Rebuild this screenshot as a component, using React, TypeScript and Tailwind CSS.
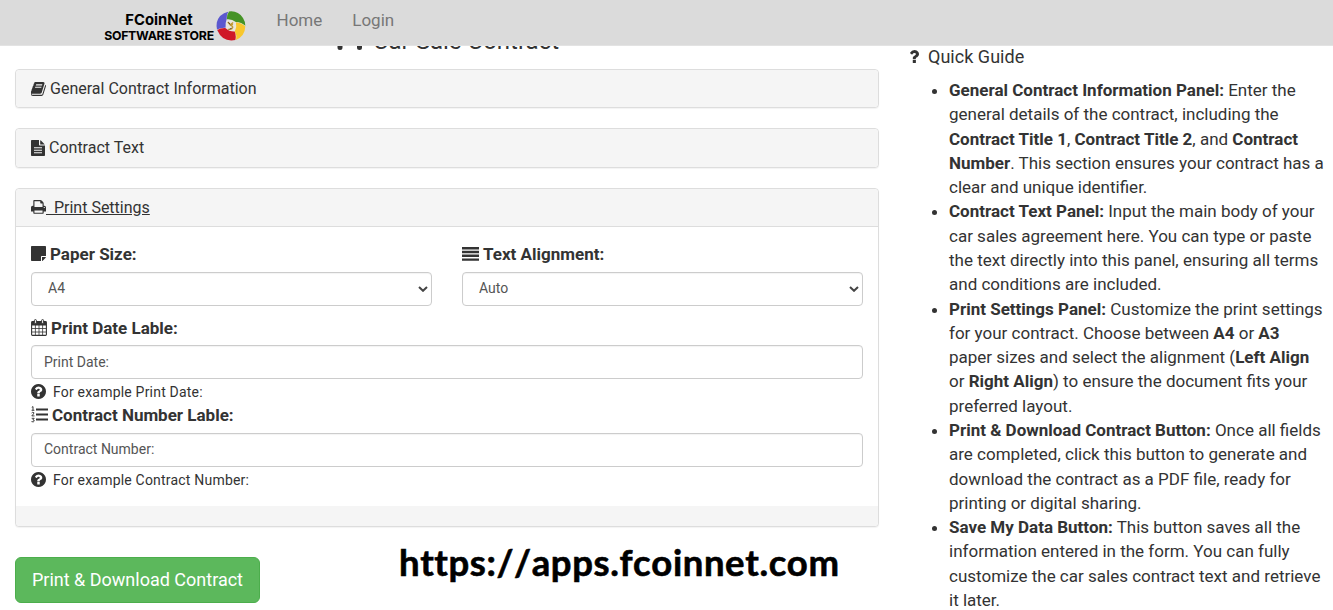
import type { ReactNode } from "react";

const PATHS = {
  book: "M1639 478q40 57 18 129l-275 906q-19 64-76.5 107.5t-122.5 43.5h-923q-77 0-148.5-53.5t-99.5-131.5q-24-67-2-127 0-4 3-27t4-37q1-8-3-21.5t-3-19.5q2-11 8-21t16.5-23.5 16.5-23.5q23-38 45-91.5t30-91.5q3-10 .5-30t-.5-28q3-11 17-28t17-23q21-36 42-92t25-90q1-9-2.5-32t.5-28q4-13 22-30.5t22-22.5q19-26 42.5-84.5t27.5-96.5q1-8-3-25.5t-2-26.5q2-8 9-18t18-23 17-21q8-12 16.5-30.5t15-35 16-36 19.5-32 26.5-23.5 36-11.5 47.5 5.5l-1 3q38-9 51-9h761q74 0 114 56t18 130l-274 906q-36 119-71.5 153.5t-128.5 34.5h-869q-27 0-38 15-11 16-1 43 24 70 144 70h923q29 0 56-15.5t35-41.5l300-987q7-22 5-57 38 15 59 43zm-1064 2q-4 13 2 22.5t20 9.5h608q13 0 25.5-9.5t16.5-22.5l21-64q4-13-2-22.5t-20-9.5h-608q-13 0-25.5 9.5t-16.5 22.5zm-83 256q-4 13 2 22.5t20 9.5h608q13 0 25.5-9.5t16.5-22.5l21-64q4-13-2-22.5t-20-9.5h-608q-13 0-25.5 9.5t-16.5 22.5z",
  print: "M448 1536h896v-256h-896v256zm0-640h896v-384h-160q-40 0-68-28t-28-68v-160h-640v640zm1152 64q0-26-19-45t-45-19-45 19-19 45 19 45 45 19 45-19 19-45zm128 0v416q0 13-9.5 22.5t-22.5 9.5h-224v160q0 40-28 68t-68 28h-960q-40 0-68-28t-28-68v-160h-224q-13 0-22.5-9.5t-9.5-22.5v-416q0-79 56.5-135.5t135.5-56.5h64v-544q0-40 28-68t68-28h672q40 0 88 20t76 48l152 152q28 28 48 76t20 88v256h64q79 0 135.5 56.5t56.5 135.5z",
  help: "M1024 1376v-192q0-14-9-23t-23-9h-192q-14 0-23 9t-9 23v192q0 14 9 23t23 9h192q14 0 23-9t9-23zm256-672q0-88-55.5-163t-138.5-116-170-41q-243 0-371 213-15 24 8 42l132 100q7 6 19 6 16 0 25-12 53-68 86-92 34-24 86-24 48 0 85.5 26t37.5 59q0 38-20 61t-68 45q-63 28-115.5 86.5t-52.5 125.5v36q0 14 9 23t23 9h192q14 0 23-9t9-23q0-19 21.5-49.5t54.5-49.5q32-18 49-28.5t46-35 44.5-48 28-60.5 12.5-81zm384 192q0 209-103 385.5t-279.5 279.5-385.5 103-385.5-103-279.5-279.5-103-385.5 103-385.5 279.5-279.5 385.5-103 385.5 103 279.5 279.5 103 385.5z",
  question: "M1024 1376v-192q0-14-9-23t-23-9h-192q-14 0-23 9t-9 23v192q0 14 9 23t23 9h192q14 0 23-9t9-23zm256-672q0-88-55.5-163t-138.5-116-170-41q-243 0-371 213-15 24 8 42l132 100q7 6 19 6 16 0 25-12 53-68 86-92 34-24 86-24 48 0 85.5 26t37.5 59q0 38-20 61t-68 45q-63 28-115.5 86.5t-52.5 125.5v36q0 14 9 23t23 9h192q14 0 23-9t9-23q0-19 21.5-49.5t54.5-49.5q32-18 49-28.5t46-35 44.5-48 28-60.5 12.5-81z",
};

function Glyph({ d, box, className }: { d: string; box: string; className: string }) {
  return (
    <svg viewBox={box} className={className} fill="currentColor" preserveAspectRatio="none">
      <path d={d} />
    </svg>
  );
}

function FileText() {
  return (
    <svg viewBox="0 0 14 16" className="-mt-px h-4 w-[14px]" fill="currentColor">
      <path fillRule="evenodd" d="M.8 0H8v4.800q0 .8.800.8H14v9.600q0 .8-.8.8H.8q-.8 0-.8-.8V.8Q0 0 .8 0zM3 7.200v1h8v-1zM3 9.700v1h8v-1zM3 12.200v1h8v-1z" />
      <path d="M9.200.2q.4.100.7.400l3.400 3.400q.3.300.4.600H9.200z" />
    </svg>
  );
}

function Note() {
  return (
    <svg viewBox="0 0 15 15" className="h-[15px] w-[15px]" fill="currentColor">
      <path d="M.8 0h13.4q.8 0 .8.8V10h-4.2q-.8 0-.8.8V15H.8Q0 15 0 14.200V.8Q0 0 .8 0zM11 11h3.900q-.2.700-.7 1.200l-2 2q-.5.500-1.200.7z" />
    </svg>
  );
}

function Calendar() {
  return (
    <svg viewBox="0 0 16 17" className="h-[17px] w-4" fill="none" stroke="currentColor">
      <path d="M1 2.500h14v4H1z" fill="currentColor" stroke="none" />
      <rect x=".6" y="2.600" width="14.800" height="13.800" rx=".8" strokeWidth="1.100" />
      <path d="M1 9.500h14M1 13h14M4.400 6v10M8 6v10M11.600 6v10" strokeWidth=".8" />
      <rect x="3.400" y=".6" width="2" height="3.800" rx=".9" fill="white" strokeWidth="1" />
      <rect x="10.600" y=".6" width="2" height="3.800" rx=".9" fill="white" strokeWidth="1" />
    </svg>
  );
}

function Lines() {
  return (
    <svg viewBox="0 0 17 14" className="h-[14px] w-[17px]" fill="currentColor">
      <path d="M0 0h17v2.400H0zM0 3.800h17v2.400H0zM0 7.600h17V10H0zM0 11.400h17v2.400H0z" />
    </svg>
  );
}

function NumberedLines() {
  return (
    <svg viewBox="0 0 17 17" className="h-[17px] w-[17px]" fill="none" stroke="currentColor">
      <path d="M5 3.500h12M5 8.500h12M5 13.500h12" strokeWidth="2.200" />
      <path d="M.8 1.300 2 .6v3.600M.6 4.300h2.800M.6 7q1-1.200 2.200-.4.500.9-2 3.300h2.700M.7 12.300h2.500l-1.300 1.500q1.600 0 1.300 1.300-.5 1.300-2.700.5" strokeWidth=".95" />
    </svg>
  );
}

function Car() {
  return (
    <svg viewBox="0 0 28 20" className="h-5 w-7" fill="#333">
      <path d="M4 6 6.500 1Q7 0 8.500 0h11q1.500 0 2 1L24 6q3 .5 3 2.500V13v4.500a2.500 2.500 0 0 1-5 0V13H7.500v4.500a2.500 2.500 0 0 1-5 0V13H1V8.500Q1 6.500 4 6z" />
    </svg>
  );
}

function Logo() {
  return (
    <div className="flex w-[143px] items-center">
      <div className="flex w-[112px] shrink-0 flex-col items-center pt-[3px] whitespace-nowrap font-['Inter',sans-serif] font-bold text-black">
        <span className="text-[14.800px] leading-[15px]">FCoinNet</span>
        <span className="mt-px text-[12.300px] leading-[14px] tracking-[-0.260px]">SOFTWARE STORE</span>
      </div>
      <svg viewBox="0 0 30 30" className="-mt-[2px] ml-px h-[30px] w-[30px] shrink-0">
        <circle cx="14.800" cy="15" r="13.800" fill="#e8e6de" />
        <path d="M12.200.8Q3 3 .8 11.500q-.6 3.500.2 6.900 4-2 8.600-1.700Q9 12.500 10.700 8q-.3-4 1.500-7.200z" fill="#5b58cf" />
        <path d="M13 .5Q22-.6 27 7q2.300 3.500 2.300 7.700Q25.500 11 19.800 10.900 16 7.700 10.900 8.200 10.800 3.500 13 .5z" fill="#459326" />
        <path d="M29.300 15.500Q29 25 20 28.900q1.200-4-1.200-8.300 2.300-4.500 1.100-9.400 5.500.5 9.400 4.300z" fill="#f8c72d" />
        <path d="M1.200 19Q4.500 16.800 9.300 17q4.200 3.800 9.400 3.500 1.800 4.500.6 8.600Q6.500 31.500 1.200 19z" fill="#cf1828" />
        <path d="m11.800 11 2.200 2.700 3.200-2.200M12 18.300q4 .7 4.700-1.700.2-2-2.700-2.500l3-1" fill="none" stroke="#c29b35" strokeWidth="1.300" />
        <path d="m12.500 11.300 1.500 2M13.500 18.200l2.200-1" stroke="#33291c" strokeWidth=".8" />
      </svg>
    </div>
  );
}

function Panel({ children }: { children: ReactNode }) {
  return <section className="rounded border border-[#ddd] bg-white shadow-[0_1px_1px_rgba(0,0,0,0.05)]">{children}</section>;
}

function Select({ value }: { value: string }) {
  return (
    <div className="flex h-[34px] items-center justify-between rounded border border-[#ccc] pr-[3px] pl-4 text-[14px] text-[#555] shadow-[inset_0_1px_1px_rgba(0,0,0,0.05)]">
      <span className="-mt-0.5">{value}</span>
      <svg viewBox="0 0 10 6" className="h-1.5 w-2.5" fill="none" stroke="#444" strokeWidth="2">
        <path d="m1 1 4 3.800L9 1" />
      </svg>
    </div>
  );
}

function Field({ value, className }: { value: string; className: string }) {
  return (
    <div className="flex h-[34px] items-center rounded border border-[#ccc] pl-3 text-[14px] text-[#555] shadow-[inset_0_1px_1px_rgba(0,0,0,0.05)]">
      <span className={className}>{value}</span>
    </div>
  );
}

function Hint({ children }: { children: ReactNode }) {
  return (
    <div className="flex h-[25px] items-center text-[14px] tracking-[0.200px]">
      <Glyph d={PATHS.help} box="128 128 1536 1536" className="mr-[7px] h-[15px] w-[15px]" />
      <span className="pt-px">{children}</span>
    </div>
  );
}

function Label({ icon, children }: { icon: ReactNode; children: ReactNode }) {
  return (
    <div className="flex h-6 items-center gap-1 whitespace-nowrap text-[17px] font-bold">
      <span className="-mt-px">{icon}</span>
      <span className="pt-0.5">{children}</span>
    </div>
  );
}

function Guide() {
  return (
    <aside className="w-[430px] shrink-0 pt-[44px]">
      <h4 className="flex h-6 items-center text-[18px] tracking-[0.03px]">
        <Glyph d={PATHS.question} box="540 384 740 1024" className="mr-[9px] ml-0.5 h-[13px] w-[9px]" />
        Quick Guide
      </h4>
      <ul className="mt-[10px] ml-[41px] list-disc text-[17px] leading-[24.286px] whitespace-nowrap">
        <li><b>General Contract Information Panel:</b> Enter the<br />general details of the contract, including the<br /><b>Contract Title 1</b>, <b>Contract Title 2</b>, and <b>Contract<br />Number</b>. This section ensures your contract has a<br />clear and unique identifier.</li>
        <li><b>Contract Text Panel:</b> Input the main body of your<br />car sales agreement here. You can type or paste<br />the text directly into this panel, ensuring all terms<br />and conditions are included.</li>
        <li><b>Print Settings Panel:</b> Customize the print settings<br />for your contract. Choose between <b>A4</b> or <b>A3</b><br />paper sizes and select the alignment (<b>Left Align</b><br />or <b>Right Align</b>) to ensure the document fits your<br />preferred layout.</li>
        <li><b>Print &amp; Download Contract Button:</b> Once all fields<br />are completed, click this button to generate and<br />download the contract as a PDF file, ready for<br />printing or digital sharing.</li>
        <li><b>Save My Data Button:</b> This button saves all the<br />information entered in the form. You can fully<br />customize the car sales contract text and retrieve<br />it later.</li>
      </ul>
    </aside>
  );
}

export default function App() {
  return (
    <div className="h-[610px] w-[1333px] overflow-hidden bg-white font-['Roboto',sans-serif] text-[17px] text-[#333]">
      <header className="fixed top-0 left-0 z-10 flex h-[46px] w-[1333px] items-start border-b border-[#e3e3e3] bg-[#dbdbdb] pl-[103px]">
        <div className="mt-[10px]"><Logo /></div>
        <nav className="mt-2 ml-[30.500px] flex gap-[30px] text-[17px] leading-6 text-[#777]">
          <a>Home</a>
          <a>Login</a>
        </nav>
      </header>
      <div className="flex gap-[29px] pl-[15px]">
        <main className="w-[864px] shrink-0">
          <div className="flex h-[69px] justify-center pt-[28px] text-[24px] leading-[26px]">
            <div className="flex gap-[10px]"><div className="pt-[2px]"><Car /></div><h3>Car Sale Contract</h3></div>
          </div>
          <div className="flex flex-col gap-5 text-[16px]">
            <Panel>
              <div className="flex h-[37px] items-center gap-1 rounded bg-[#f5f5f5] px-[15px]">
                <Glyph d={PATHS.book} box="60 128 1605 1536" className="h-[14px] w-[15px]" />
                General Contract Information
              </div>
            </Panel>
            <Panel>
              <div className="flex h-[38px] items-center gap-1 rounded bg-[#f5f5f5] px-[15px]">
                <FileText />
                Contract Text
              </div>
            </Panel>
            <Panel>
              <div className="flex h-[38px] items-center rounded-t border-b border-[#ddd] bg-[#f5f5f5] px-[15px]">
                <Glyph d={PATHS.print} box="64 128 1664 1664" className="h-[15px] w-[15px]" />
                <span className="whitespace-pre underline">{"  Print Settings"}</span>
              </div>
              <div className="h-[279px] px-[15px] pt-[15px]">
                <div className="grid grid-cols-2 gap-[30px]">
                  <div>
                    <Label icon={<Note />}>Paper Size:</Label>
                    <div className="mt-[6px]"><Select value="A4" /></div>
                  </div>
                  <div>
                    <Label icon={<Lines />}>Text Alignment:</Label>
                    <div className="mt-[6px]"><Select value="Auto" /></div>
                  </div>
                </div>
                <div className="mt-[10px] mb-[5px]"><Label icon={<Calendar />}>Print Date Lable:</Label></div>
                <Field value="Print Date:" className="pt-px" />
                <Hint>For example Print Date:</Hint>
                <div className="mt-[-1px] mb-[6px]"><Label icon={<NumberedLines />}>Contract Number Lable:</Label></div>
                <Field value="Contract Number:" className="-mt-px" />
                <Hint>For example Contract Number:</Hint>
              </div>
              <div className="h-5 rounded-b bg-[#f5f5f5]" />
            </Panel>
          </div>
          <div className="mt-[30px] flex items-start">
            <button className="h-[46px] w-[245px] rounded-md border border-[#4cae4c] bg-[#5cb85c] pb-0.5 text-[18px] whitespace-nowrap text-white">Print &amp; Download Contract</button>
            <div className="mt-[-18px] ml-[139px] font-['Lato',sans-serif] text-[36.500px] leading-[46px] font-bold tracking-[0.600px] whitespace-nowrap text-black [-webkit-text-stroke:0.6px_black] [font-kerning:none] [font-variant-ligatures:none]">https://apps.fcoinnet.com</div>
          </div>
        </main>
        <Guide />
      </div>
    </div>
  );
}
